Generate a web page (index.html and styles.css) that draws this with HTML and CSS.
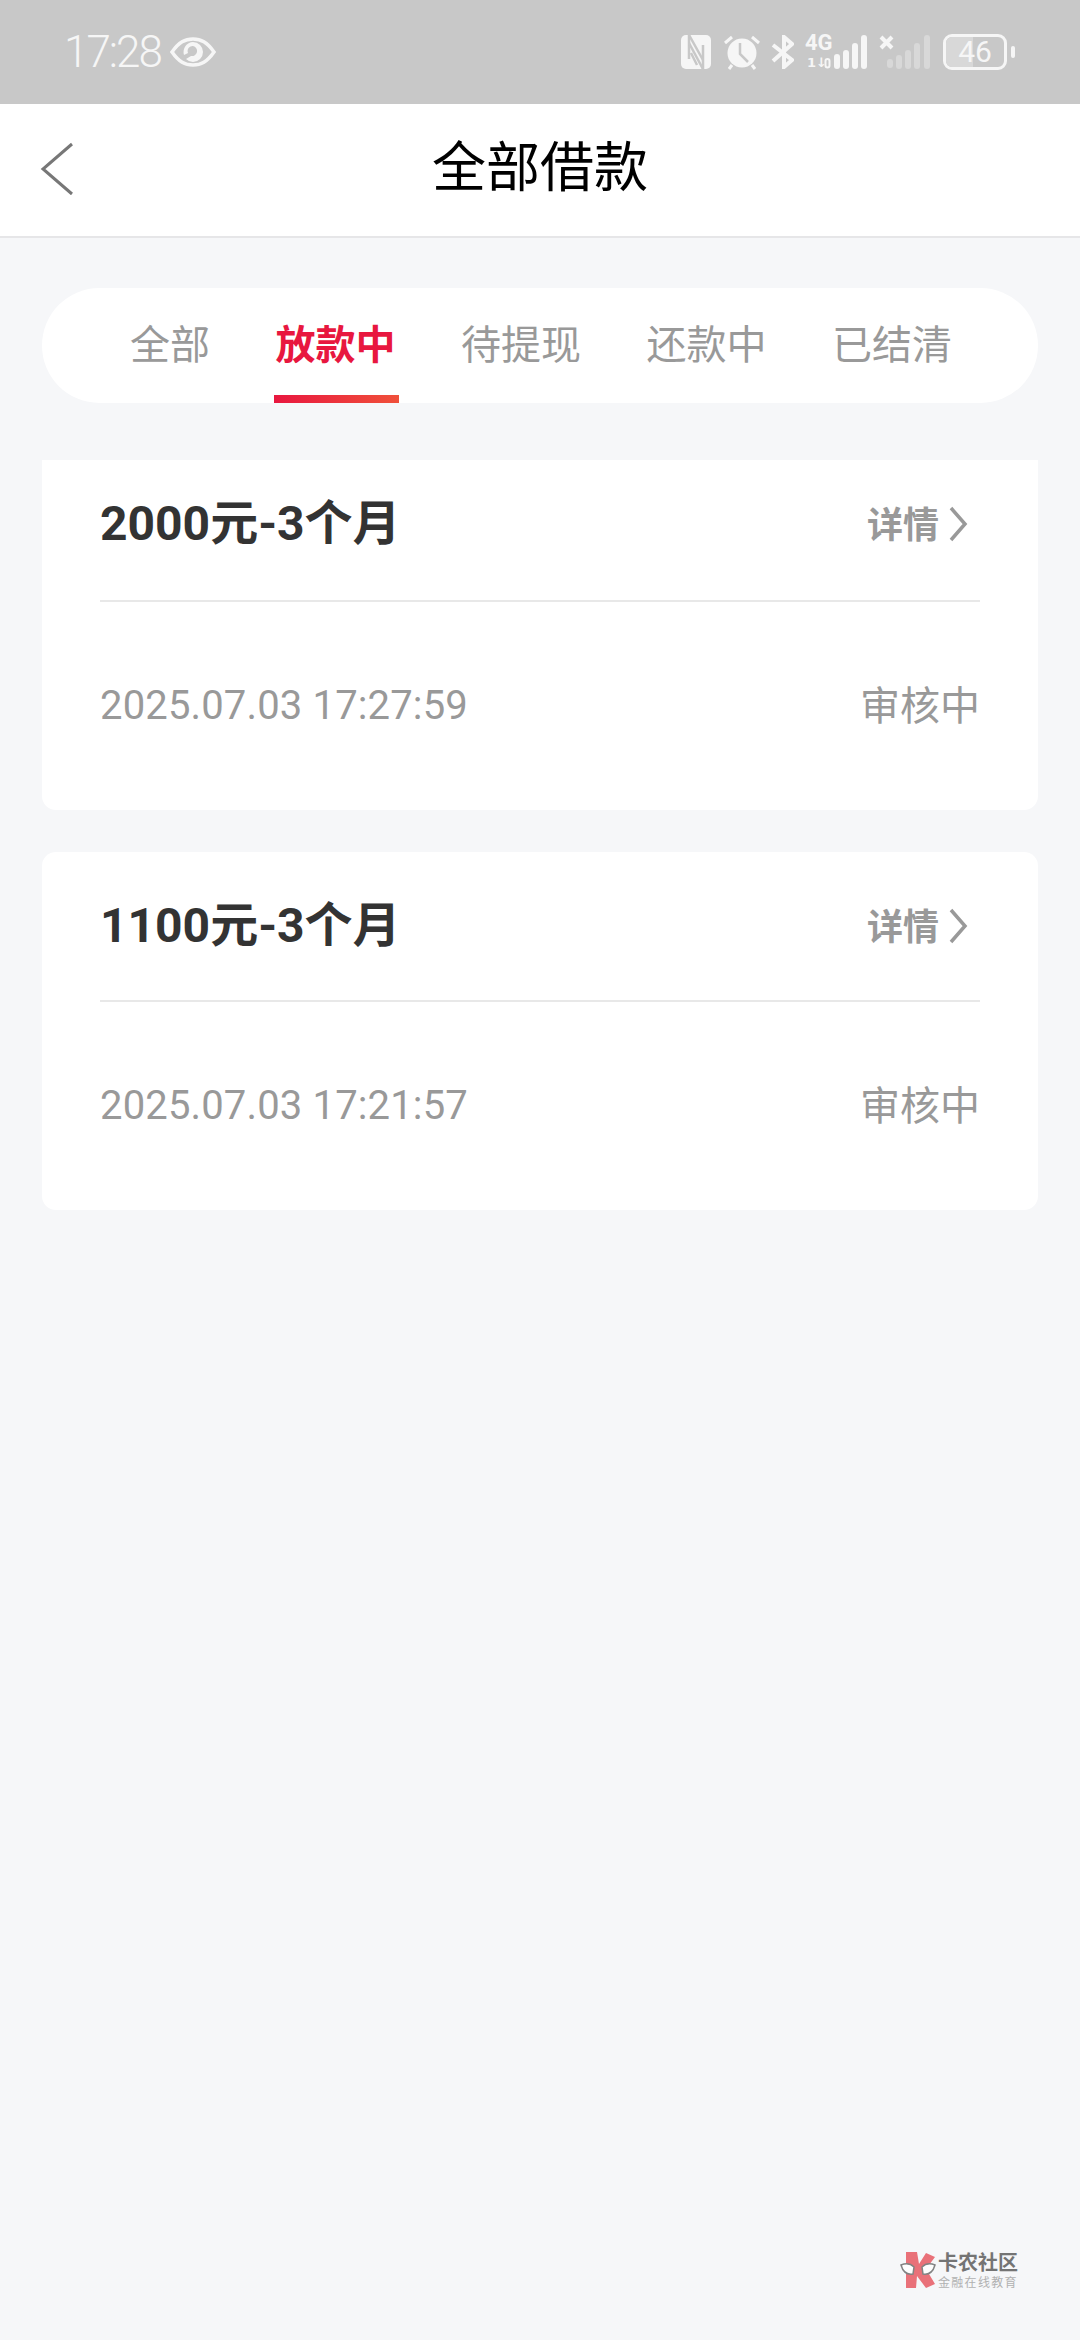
FILE: index.html
```html
<!DOCTYPE html>
<html lang="zh-CN">
<head>
<meta charset="utf-8">
<title>全部借款</title>
<link rel="stylesheet" href="styles.css">
</head>
<body>
<div class="page">
  <header class="status">
    <div class="status-left">
      <span class="clock">17:28</span>
      <svg class="eye" viewBox="0 0 46 32" width="46" height="32"><path d="M2 16C9 6 15 3 23 3s14 3 21 13c-7 10-13 13-21 13S9 26 2 16Z" fill="none" stroke="#f6f6f6" stroke-width="3.500"/><path fill-rule="evenodd" d="M23 6a10 10 0 1 1 0 20 10 10 0 0 1-7-3l5-3a5 5 0 0 0 2-10 5 5 0 0 0-5 7l-4 2a10 10 0 0 1 9-13Z" fill="#f6f6f6"/></svg>
    </div>
    <div class="status-right">
      <svg class="ic-nfc" width="30" height="34" viewBox="0 0 30 34"><rect x="0" y="0" width="30" height="34" rx="5" fill="#f6f6f6"/><path d="M8 0v24M22 34V10" stroke="#c8c8c8" stroke-width="2.500"/><path d="M8 8l14 26M8 0l14 25M10 18l6 12" stroke="#c8c8c8" stroke-width="2.500" fill="none"/></svg>
      <svg class="ic-alarm" width="36" height="36" viewBox="0 0 36 36"><circle cx="18" cy="19" r="14.500" fill="#f6f6f6"/><path d="M16 9v11l8 8" stroke="#c8c8c8" stroke-width="2.500" fill="none"/><path d="M1 9l7-6M35 9l-7-6M8 31l-3 4M28 31l3 4" stroke="#f6f6f6" stroke-width="3" fill="none"/></svg>
      <svg class="ic-bt" width="23" height="34" viewBox="0 0 23 34"><path d="M2 10l19 15-8 7V2l8 7L2 26" stroke="#f6f6f6" stroke-width="4" fill="none"/></svg>
      <div class="net">
        <span class="net-label">4G</span>
        <span class="net-arrows">1↓</span>
        <svg class="bars-a" width="44" height="34" viewBox="0 0 44 34"><rect x="1.500" y="24" width="4" height="8.500" rx="2" fill="none" stroke="#f6f6f6" stroke-width="2"/><rect x="10" y="19" width="6" height="15" rx="3" fill="#f6f6f6"/><rect x="19" y="15" width="6" height="19" rx="3" fill="#f6f6f6"/><rect x="28" y="8" width="6" height="26" rx="3" fill="#f6f6f6"/><rect x="37" y="0" width="6" height="34" rx="3" fill="#f6f6f6"/></svg>
      </div>
      <svg class="ic-sim" width="51" height="34" viewBox="0 0 51 34"><path d="M2 2l11 11M13 2L2 13" stroke="#f6f6f6" stroke-width="4"/><g fill="#d8d8d8"><rect x="8" y="24" width="6" height="9" rx="3"/><rect x="17" y="20" width="6" height="14" rx="3"/><rect x="26" y="15" width="6" height="19" rx="3"/><rect x="35" y="8" width="6" height="26" rx="3"/><rect x="45" y="0" width="6" height="34" rx="3"/></g></svg>
      <div class="battery">
        <div class="battery-body"><span class="battery-level"></span><span class="battery-num">46</span></div>
        <span class="battery-tip"></span>
      </div>
    </div>
  </header>

  <nav class="nav">
    <svg class="back" width="34" height="56" viewBox="0 0 34 56"><path d="M33 3 4 28l29 25" fill="none" stroke="#777" stroke-width="3"/></svg>
    <h1 class="nav-title">全部借款</h1>
  </nav>

  <main class="content">
    <div class="tabs">
      <span class="tab">全部</span>
      <span class="tab tab-active">放款中</span>
      <span class="tab">待提现</span>
      <span class="tab">还款中</span>
      <span class="tab">已结清</span>
    </div>

    <section class="card card-first">
      <div class="card-head">
        <span class="card-title">2000元-3个月</span>
        <span class="card-link"><span class="card-link-text">详情</span><svg width="20" height="36" viewBox="0 0 20 36"><path d="M3 2l14 16L3 34" fill="none" stroke="#999" stroke-width="3.500"/></svg></span>
      </div>
      <div class="card-body">
        <span class="card-date">2025.07.03 17:27:59</span>
        <span class="card-state">审核中</span>
      </div>
    </section>

    <section class="card">
      <div class="card-head">
        <span class="card-title">1100元-3个月</span>
        <span class="card-link"><span class="card-link-text">详情</span><svg width="20" height="36" viewBox="0 0 20 36"><path d="M3 2l14 16L3 34" fill="none" stroke="#999" stroke-width="3.500"/></svg></span>
      </div>
      <div class="card-body">
        <span class="card-date">2025.07.03 17:21:57</span>
        <span class="card-state">审核中</span>
      </div>
    </section>
  </main>

  <div class="watermark">
    <svg width="36" height="38" viewBox="0 0 36 38"><path d="M6 1h11l2 12 7-11 9 4-9 12 9 15-9 4-9-12-1 12H6Z" fill="#e8636c"/><path d="M1 14c5-2 10-1 13 2l-1 7c-6 1-10-2-12-9ZM35 14c-5-2-10-1-13 2l1 7c6 1 10-2 12-9Z" fill="#fff" stroke="#777" stroke-width="1.500"/></svg>
    <div class="wm-text">
      <span class="wm-name">卡农社区</span>
      <span class="wm-sub">金融在线教育</span>
    </div>
  </div>
</div>
</body>
</html>
```

FILE: styles.css
```css
* { box-sizing: border-box; margin: 0; padding: 0; }
html, body { background: #f6f7f9; }
body { font-family: "Roboto", "Noto Sans CJK SC", sans-serif; }
.page { width: 1080px; height: 2340px; position: relative; overflow: hidden; display: flex; flex-direction: column; background: #f6f7f9; }

.status { height: 104px; flex: none; background: #c8c8c8; display: flex; align-items: center; justify-content: space-between; padding: 0 0 0 64px; }
.status-left { display: flex; align-items: center; gap: 9px; }
.clock { font-size: 44px; color: #f6f6f6; font-weight: 300; line-height: 1; letter-spacing: -2px; font-family: "Roboto", sans-serif; }
.eye { display: block; }
.status-right { display: flex; align-items: center; padding-right: 65px; }
.status-right svg { display: block; flex: none; }
.ic-alarm { margin-left: 13px; }
.ic-bt { margin-left: 11px; }
.net { position: relative; width: 62px; height: 34px; margin-left: 11px; color: #f6f6f6; }
.net-label { position: absolute; left: 0; top: -3px; font-size: 22px; font-weight: 700; font-family: "Roboto", sans-serif; line-height: 22px; }
.net-arrows { position: absolute; left: 2px; top: 21px; font-size: 13px; font-weight: 700; line-height: 14px; font-family: "DejaVu Sans", sans-serif; }
.bars-a { position: absolute; left: 19px; top: 0; }
.ic-sim { margin-left: 12px; }
.battery { display: flex; align-items: center; gap: 4px; margin-left: 13px; }
.battery-body { width: 64px; height: 36px; border: 3px solid #f6f6f6; border-radius: 9px; position: relative; display: flex; align-items: center; justify-content: center; overflow: hidden; }
.battery-level { position: absolute; left: 0; top: 0; bottom: 0; width: 46%; background: #d8d8d8; }
.battery-num { position: relative; font-size: 30px; color: #f6f6f6; font-weight: 400; line-height: 1; }
.battery-tip { width: 4px; height: 12px; background: #f6f6f6; border-radius: 2px; }

.nav { height: 134px; flex: none; background: #fff; border-bottom: 2px solid #e6e6e8; display: flex; align-items: center; justify-content: center; position: relative; }
.back { position: absolute; left: 39px; top: 37px; }
.nav-title { font-size: 54px; font-weight: 400; color: #000; line-height: 1; font-family: "Noto Sans CJK SC", sans-serif; margin-top: -12px; }

.content { flex: 1; padding: 50px 42px 0; display: flex; flex-direction: column; }
.tabs { height: 115px; background: #fff; border-radius: 58px; display: flex; justify-content: space-between; padding: 0 86px 0 88px; flex: none; margin-bottom: 57px; }
.tab { font-size: 40px; line-height: 1; color: #999; padding-top: 34px; font-family: "Noto Sans CJK SC", sans-serif; position: relative; }
.tab-active { color: #e8173f; font-weight: 700; }
.tab-active::after { content: ""; position: absolute; left: -2px; right: -3px; bottom: 0; height: 8px; background: linear-gradient(90deg, #e8173f, #f0503a); }

.card { background: #fff; border-radius: 14px; padding: 0 58px; margin-bottom: 42px; flex: none; }
.card-first { border-radius: 0 0 14px 14px; }
.card-head { height: 150px; border-bottom: 2px solid #e8e8e8; display: flex; align-items: center; justify-content: space-between; }
.card-first .card-head { height: 142px; padding-bottom: 12px; }
.card-title { font-size: 48px; font-weight: 700; color: #333; line-height: 1; font-family: "Roboto", "Noto Sans CJK SC", sans-serif; }
.card-link { display: flex; align-items: center; gap: 9px; font-size: 36px; font-weight: 700; color: #999; line-height: 1; margin-right: 12px; font-family: "Noto Sans CJK SC", sans-serif; }
.card-link-text { padding-bottom: 5px; }
.card-body { display: flex; justify-content: space-between; align-items: center; height: 208px; }
.card-date { font-size: 40px; letter-spacing: .15px; color: #999; line-height: 1; font-family: "Roboto", sans-serif; }
.card-state { font-size: 40px; color: #999; line-height: 1; padding-bottom: 6px; font-family: "Noto Sans CJK SC", sans-serif; }

.watermark { position: absolute; left: 900px; top: 2251px; display: flex; align-items: center; gap: 2px; opacity: .9; }
.wm-text { display: flex; flex-direction: column; gap: 3px; }
.wm-name { font-size: 20px; font-weight: 700; color: #666; line-height: 20px; font-family: "Noto Sans CJK SC", sans-serif; }
.wm-sub { font-size: 12px; color: #aaa; line-height: 13px; letter-spacing: 1.3px; font-family: "Noto Sans CJK SC", sans-serif; }
```
